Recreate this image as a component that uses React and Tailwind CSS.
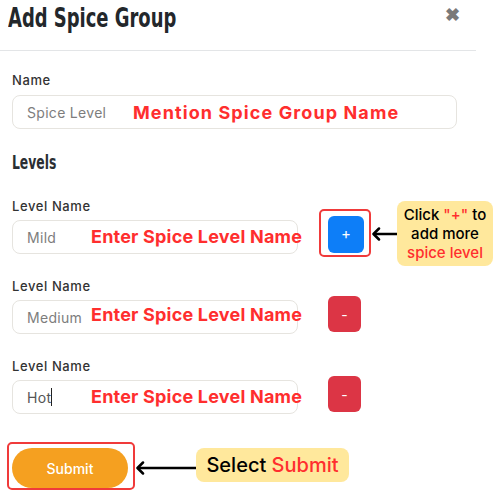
import React from "react";

const body = { fontFamily: "Inter, 'Noto Sans', sans-serif" };
const cond = { fontFamily: "'DejaVu Sans', sans-serif" };

function Arrow({ className, width }) {
  return (
    <svg className={className} width={width} height="14" viewBox={`0 0 ${width} 14`}>
      <line x1="3" y1="7" x2={width} y2="7" stroke="#000" strokeWidth="2.5" />
      <polyline points="8,1.5 2.5,7 8,12.5" fill="none" stroke="#000" strokeWidth="2.5" strokeLinecap="round" strokeLinejoin="round" />
    </svg>
  );
}

function LevelRow({ value, typed, plus }) {
  return (
    <div className="flex items-end mt-[22px]">
      <div className="w-[286px]">
        <div className="text-[13px] leading-[20px] font-medium text-[#333] tracking-[0.6px]">Level Name</div>
        <div className="mt-1 h-[34px] rounded-lg border border-[#e6e4df] flex items-center pl-[14px] text-[14px] tracking-[0.3px]">
          <span className={typed ? "text-[#555]" : "text-[#7d7d7d]"}>{value}</span>
          {typed && <span className="inline-block w-px h-[18px] bg-[#222]" />}
        </div>
      </div>
      {plus ? (
        <button className="ml-[30px] mb-px w-[36px] h-[37px] rounded-md bg-[#0d7ef8] text-white text-[15px] flex items-center justify-center">+</button>
      ) : (
        <button className="ml-[30px] mb-[2px] w-[33px] h-[36px] rounded-md bg-[#dc3545] text-white text-[14px] flex items-center justify-center">-</button>
      )}
    </div>
  );
}

export default function App() {
  return (
    <div className="relative w-[500px] h-[500px] bg-white overflow-hidden" style={body}>
      <div className="w-[476px]">
        <div className="h-[51px] border-b border-[#e3e5e7] flex justify-between items-start">
          <h1 className="pl-2 pt-[2px] text-[26px] leading-[32px] font-bold text-[#23272b] whitespace-nowrap" style={cond}>
            <span className="inline-block origin-left scale-x-[0.69]">Add Spice Group</span>
          </h1>
          <span className="pr-[16px] pt-[4px] text-[#7a7a7a] text-[18px] font-bold leading-[22px]">✖</span>
        </div>
        <div className="px-3">
          <div className="mt-[19px] text-[13px] leading-[20px] font-medium text-[#333] tracking-[0.6px]">Name</div>
          <div className="mt-[5px] h-[34px] w-[445px] rounded-lg border border-[#e6e4df] flex items-center pl-[14px] text-[14px] text-[#7d7d7d] tracking-[0.3px]">
            Spice Level
          </div>
          <div className="mt-[21px] text-[19px] leading-[24px] font-bold text-[#2a2e33] whitespace-nowrap" style={cond}>
            <span className="inline-block origin-left scale-x-[0.65]">Levels</span>
          </div>
          <LevelRow value="Mild" plus />
          <LevelRow value="Medium" />
          <LevelRow value="Hot" typed />
          <button className="mt-[34px] w-[116px] h-[40px] rounded-full bg-[#f5a020] text-white text-[14px] font-medium">
            Submit
          </button>
        </div>
      </div>

      {/* annotations */}
      <div className="absolute left-[133px] top-[101px] text-[18px] leading-[24px] font-bold text-[#ff2e2e] whitespace-nowrap tracking-[1.1px]">Mention Spice Group Name</div>
      <div className="absolute left-[91px] top-[225px] text-[18px] leading-[24px] font-bold text-[#ff2e2e] whitespace-nowrap tracking-[0.2px]">Enter Spice Level Name</div>
      <div className="absolute left-[91px] top-[303px] text-[18px] leading-[24px] font-bold text-[#ff2e2e] whitespace-nowrap tracking-[0.2px]">Enter Spice Level Name</div>
      <div className="absolute left-[91px] top-[385px] text-[18px] leading-[24px] font-bold text-[#ff2e2e] whitespace-nowrap tracking-[0.2px]">Enter Spice Level Name</div>

      <div className="absolute left-[319px] top-[209px] w-[52px] h-[48px] rounded-[5px] border-2 border-[#f03a3a]" />
      <Arrow className="absolute left-[371px] top-[227px]" width={27} />
      <div className="absolute left-[397px] top-[201px] w-[96px] h-[65px] rounded-lg bg-[#ffe89c] flex flex-col items-center justify-center text-[15px] leading-[19px] font-medium text-black">
        <div>Click <span className="text-[#ff2e2e]">"+"</span> to</div>
        <div>add more</div>
        <div className="text-[#ff2e2e]">spice level</div>
      </div>

      <div className="absolute left-[7px] top-[442px] w-[128px] h-[48px] rounded-[5px] border-2 border-[#f03a3a]" />
      <Arrow className="absolute left-[135px] top-[461px]" width={61} />
      <div className="absolute left-[196px] top-[448px] w-[153px] h-[34px] rounded-lg bg-[#ffe89c] flex items-center justify-center text-[20px] font-medium text-black whitespace-nowrap">
        Select&nbsp;<span className="text-[#ff2e2e]">Submit</span>
      </div>
    </div>
  );
}
